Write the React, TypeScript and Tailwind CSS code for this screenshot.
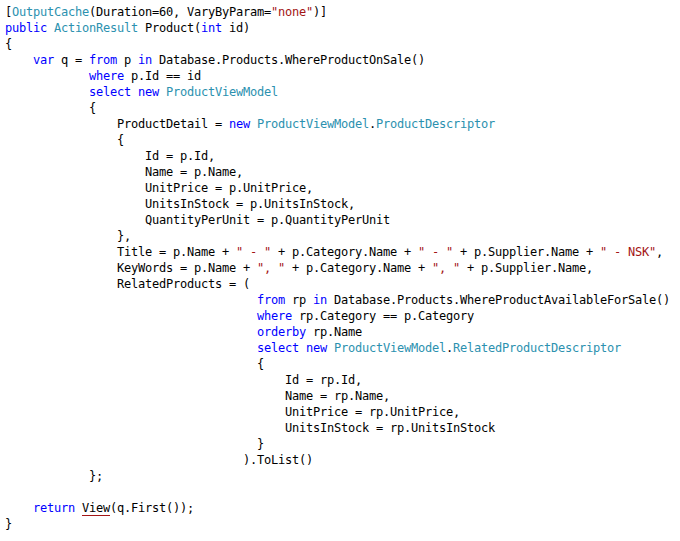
import * as React from 'react';

const K = ({ children }: { children: React.ReactNode }) => <span className="text-[#0000ff]">{children}</span>;
const T = ({ children }: { children: React.ReactNode }) => <span className="text-[#2b91af]">{children}</span>;
const S = ({ children }: { children: React.ReactNode }) => <span className="text-[#a31515]">{children}</span>;

const Line = ({ children }: { children?: React.ReactNode }) => (
  <div className="h-4 leading-4 whitespace-pre">{children}</div>
);

export default function App() {
  const i2 = '            ';
  const i3 = '                ';
  const i4 = '                    ';
  const i9 = '                                    ';
  const i10 = '                                        ';
  return (
    <div
      className="w-[680px] h-[541px] bg-white text-[#000] pl-[5px] pt-[4px] text-[12px] tracking-[-0.225px] overflow-hidden"
      style={{ fontFamily: '"DejaVu Sans Mono", "Liberation Mono", monospace' }}
    >
      <Line>[<T>OutputCache</T>(Duration=60, VaryByParam=<S>"none"</S>)]</Line>
      <Line><K>public</K> <T>ActionResult</T> Product(<K>int</K> id)</Line>
      <Line>{'{'}</Line>
      <Line>{'    '}<K>var</K> q = <K>from</K> p <K>in</K> Database.Products.WhereProductOnSale()</Line>
      <Line>{i2}<K>where</K> p.Id == id</Line>
      <Line>{i2}<K>select</K> <K>new</K> <T>ProductViewModel</T></Line>
      <Line>{i2}{'{'}</Line>
      <Line>{i3}ProductDetail = <K>new</K> <T>ProductViewModel</T>.<T>ProductDescriptor</T></Line>
      <Line>{i3}{'{'}</Line>
      <Line>{i4}Id = p.Id,</Line>
      <Line>{i4}Name = p.Name,</Line>
      <Line>{i4}UnitPrice = p.UnitPrice,</Line>
      <Line>{i4}UnitsInStock = p.UnitsInStock,</Line>
      <Line>{i4}QuantityPerUnit = p.QuantityPerUnit</Line>
      <Line>{i3}{'},'}</Line>
      <Line>{i3}Title = p.Name + <S>" - "</S> + p.Category.Name + <S>" - "</S> + p.Supplier.Name + <S>" - NSK"</S>,</Line>
      <Line>{i3}KeyWords = p.Name + <S>", "</S> + p.Category.Name + <S>", "</S> + p.Supplier.Name,</Line>
      <Line>{i3}RelatedProducts = (</Line>
      <Line>{i9}<K>from</K> rp <K>in</K> Database.Products.WhereProductAvailableForSale()</Line>
      <Line>{i9}<K>where</K> rp.Category == p.Category</Line>
      <Line>{i9}<K>orderby</K> rp.Name</Line>
      <Line>{i9}<K>select</K> <K>new</K> <T>ProductViewModel</T>.<T>RelatedProductDescriptor</T></Line>
      <Line>{i9}{'{'}</Line>
      <Line>{i10}Id = rp.Id,</Line>
      <Line>{i10}Name = rp.Name,</Line>
      <Line>{i10}UnitPrice = rp.UnitPrice,</Line>
      <Line>{i10}UnitsInStock = rp.UnitsInStock</Line>
      <Line>{i9}{'}'}</Line>
      <Line>{'                                  '}).ToList()</Line>
      <Line>{i2}{'};'}</Line>
      <Line />
      <Line>{'    '}<K>return</K> <span className="underline decoration-[#a31515] underline-offset-[3px]">View</span>(q.First());</Line>
      <Line>{'}'}</Line>
    </div>
  );
}
